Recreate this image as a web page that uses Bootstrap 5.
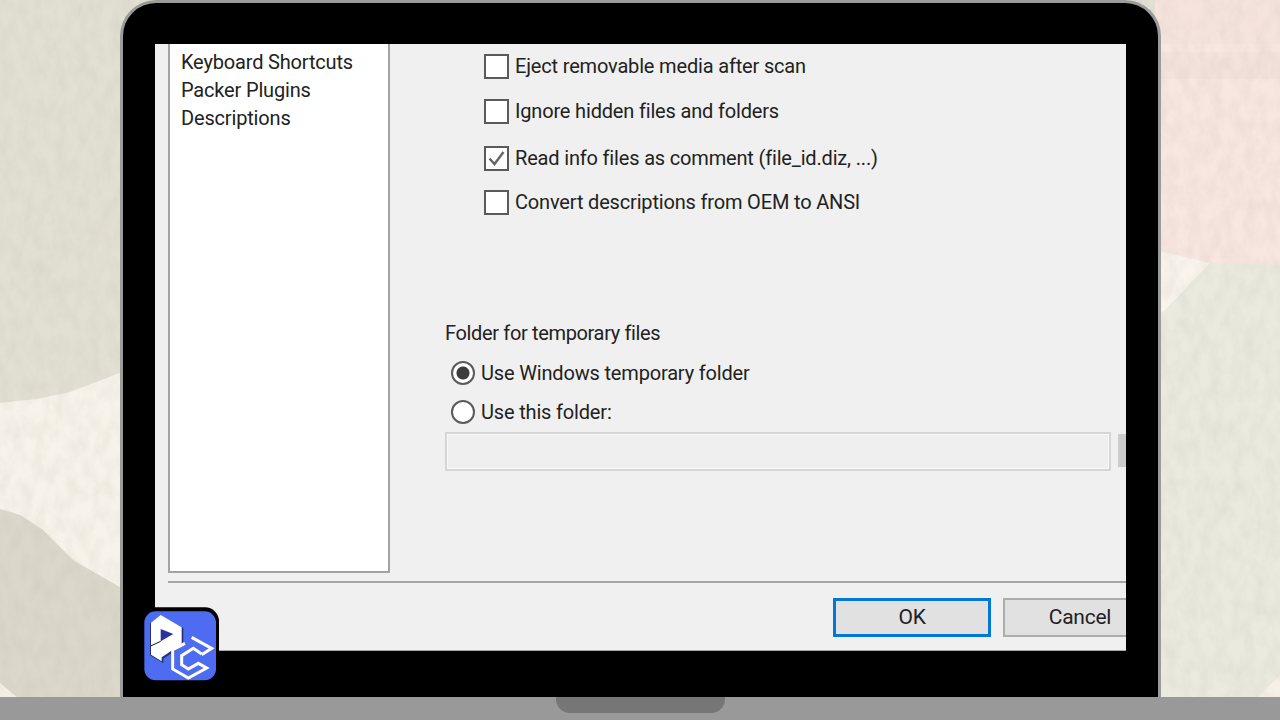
<!DOCTYPE html>
<html lang="en">
<head>
  <meta charset="UTF-8">
  <meta name="viewport" content="width=device-width, initial-scale=1.0">
  <title>Folder settings</title>
  <link href="https://cdn.jsdelivr.net/npm/bootstrap@5.3.3/dist/css/bootstrap.min.css" rel="stylesheet">
  <script src="https://cdn.jsdelivr.net/npm/bootstrap@5.3.3/dist/js/bootstrap.bundle.min.js"></script>
  <style>
    html, body { width: 1280px; height: 720px; overflow: hidden; margin: 0; }
    body { font-family: Roboto, "Open Sans", sans-serif; font-size: 20px; letter-spacing: -.17px; color: #222; background: #e6e4d7; }
    .scene { position: relative; width: 1280px; height: 720px; }
    .paper { position: absolute; inset: 0; }
    .lid { position: relative; width: 1041px; height: 697px; margin-left: 120px; padding: 41px 31px 46px 32px; background: #000; border: solid #9b9b9b; border-width: 3px 3px 0 3px; border-radius: 36px 36px 0 0; }
    .hinge-bar { position: relative; height: 23px; background: #999; }
    .hinge-notch { width: 169px; height: 16px; background: #767676; border-radius: 0 0 14px 14px; }
    .screen { width: 971px; height: 607px; background: #f0f0f0; border-bottom: 1px solid #a8a8a8; overflow: hidden; }
    .dlg-body { height: 529px; padding-left: 13px; }
    .tree-box { width: 222px; padding: 4px 0 0 11px; background: #fff; border: 2px solid #a3a3a3; border-top: 0; flex: none; }
    .tree-line { height: 28px; line-height: 28px; white-space: nowrap; }
    .opts { padding-left: 55px; flex: 1 1 auto; min-width: 0; }
    .opt-row { height: 26px; line-height: 26px; white-space: nowrap; margin: 0; padding: 0; gap: 6px; }
    .opt-row .form-check-input { width: 25px; height: 25px; margin: 0; flex: none; border-radius: 0; border: 2px solid #5a5a5a; background-color: #fff; }
    .opt-row .form-check-input:checked { background-color: #fff; border-color: #5a5a5a; background-size: 100%; background-image: url("data:image/svg+xml,%3csvg xmlns='http://www.w3.org/2000/svg' viewBox='0 0 21 21'%3e%3cpath d='M3.5 10.5l5 5.5 9-12' fill='none' stroke='%23666' stroke-width='2.4'/%3e%3c/svg%3e"); }
    .opt-row .form-check-input[type=radio] { border-radius: 50%; width: 24px; height: 24px; }
    .opt-row .form-check-input[type=radio]:checked { background-image: radial-gradient(circle, #3c3c3c 0 6px, #fff 7px); }
    .chk-a { margin-left: 39px; margin-top: 9px; }
    .chk-b { margin-left: 39px; margin-top: 19px; }
    .chk-c { margin-left: 39px; margin-top: 21px; }
    .chk-d { margin-left: 39px; margin-top: 18px; }
    .temp-title { margin-top: 105px; height: 26px; line-height: 26px; white-space: nowrap; letter-spacing: -.35px; }
    .rad-a { margin-left: 6px; margin-top: 14px; }
    .rad-b { margin-left: 6px; margin-top: 13px; }
    .path-row { margin-top: 7px; }
    .path-field, .path-field:disabled { width: 666px; height: 39px; background: #efefef; border: 2px solid #d6d6d6; border-radius: 0; padding: 0; flex: none; box-shadow: inset 0 0 0 1px #f8f8f8; }
    .path-btn { width: 20px; height: 33px; margin-left: 7px; margin-top: 2px; background: #ccc; flex: none; }
    .dlg-rule { height: 2px; margin: 8px 0 0 13px; background: #a6a6a6; }
    .dlg-foot { padding: 15px 0 0 678px; gap: 12px; }
    .win-btn { width: 158px; height: 39px; padding: 0; border-radius: 0; font-size: 21px; line-height: 1; letter-spacing: -.25px; color: #222; background: #e1e1e1; border: 2px solid #adadad; flex: none; }
    .win-btn.is-default { border: 3px solid #0078d7; }
    .win-btn.is-clip { width: 154px; }
    .logo-mark { position: absolute; left: 140px; top: 604px; width: 82px; height: 82px; }
  </style>
</head>
<body>
  <div class="scene">
    <svg class="paper" viewBox="0 0 1280 720" aria-hidden="true">
      <defs>
        <filter id="grain" x="0" y="0" width="100%" height="100%">
          <feTurbulence type="fractalNoise" baseFrequency="0.09 0.05" numOctaves="4" seed="7"/>
          <feColorMatrix values="0 0 0 0 .45  0 0 0 0 .43  0 0 0 0 .36  .28 0 0 0 -.09"/>
        </filter>
      </defs>
      <rect width="1280" height="720" fill="#e2e0d3"/>
      <path d="M0 403 L37 399 L70 392 L125 371 V600 L73 560 L43 530 L20 515 L0 509Z" fill="#f8f3ea"/>
      <path d="M0 509 L20 515 L43 530 L73 560 L125 590 V700 H20 L0 683Z" fill="#dcd7cb"/>
      <path d="M0 683 L20 700 H0Z" fill="#f5f0e6"/>
      <rect x="1155" width="125" height="720" fill="#ebeadf"/>
      <path d="M1155 0 H1280 V265 L1210 263 L1155 250Z" fill="#f8e6e0"/>
      <rect x="1155" y="52" width="125" height="27" fill="#f4e2dc"/>
      <rect x="1155" y="0" width="125" height="44" fill="#f6e3dd"/>
      <path d="M1155 250 L1210 263 L1165 310 L1155 316Z" fill="#f9f4ec"/>
      <path d="M1280 675 V700 H1255Z" fill="#f5f1e8"/>
      <rect width="1280" height="720" filter="url(#grain)"/>
    </svg>

    <div class="lid">
      <div class="screen d-flex flex-column">
        <div class="dlg-body d-flex">
          <div class="tree-box">
            <div class="tree-line">Keyboard Shortcuts</div>
            <div class="tree-line">Packer Plugins</div>
            <div class="tree-line">Descriptions</div>
          </div>
          <div class="opts">
            <label class="opt-row chk-a d-flex align-items-center"><input class="form-check-input" type="checkbox"><span>Eject removable media after scan</span></label>
            <label class="opt-row chk-b d-flex align-items-center"><input class="form-check-input" type="checkbox"><span>Ignore hidden files and folders</span></label>
            <label class="opt-row chk-c d-flex align-items-center"><input class="form-check-input" type="checkbox" checked><span>Read info files as comment (file_id.diz, ...)</span></label>
            <label class="opt-row chk-d d-flex align-items-center"><input class="form-check-input" type="checkbox"><span>Convert descriptions from OEM to ANSI</span></label>
            <div class="temp-title">Folder for temporary files</div>
            <label class="opt-row rad-a d-flex align-items-center"><input class="form-check-input" type="radio" name="tmp" checked><span>Use Windows temporary folder</span></label>
            <label class="opt-row rad-b d-flex align-items-center"><input class="form-check-input" type="radio" name="tmp"><span>Use this folder:</span></label>
            <div class="path-row d-flex">
              <input class="form-control path-field" type="text" disabled>
              <div class="path-btn"></div>
            </div>
          </div>
        </div>
        <div class="dlg-rule"></div>
        <div class="dlg-foot d-flex">
          <button class="btn win-btn is-default" type="button">OK</button>
          <button class="btn win-btn is-clip" type="button">Cancel</button>
        </div>
      </div>
    </div>

    <div class="hinge-bar d-flex justify-content-center">
      <div class="hinge-notch"></div>
    </div>

    <svg class="logo-mark" viewBox="0 0 246 246" aria-label="Logo">
      <rect x="4" y="10" width="233" height="228" rx="42" fill="#000"/>
      <rect x="13" y="22" width="215" height="207" rx="34" fill="#4d6cf2"/>
      <path d="M30 58 L62 36 L130 72 L130 124 L70 164 L70 178 L30 154Z" fill="#16204f" opacity=".75"/>
      <path d="M33 56 L62 33 L125 70 L125 120 L65 160 L65 172 L33 152Z" fill="#fff"/>
      <path d="M62 75 L100 90 L62 112Z" fill="#27349a"/>
      <path d="M32 126 L62 112" stroke="#111" stroke-width="3" fill="none"/>
      <g fill="none" stroke="#fff" stroke-width="9">
        <path d="M155 100 L215 133 L185 152"/>
        <path d="M135 118 L98 138 V195 L145 222 L200 192 L175 178 L145 195 L125 182 V155 L160 133 L185 150"/>
      </g>
    </svg>
  </div>
</body>
</html>
